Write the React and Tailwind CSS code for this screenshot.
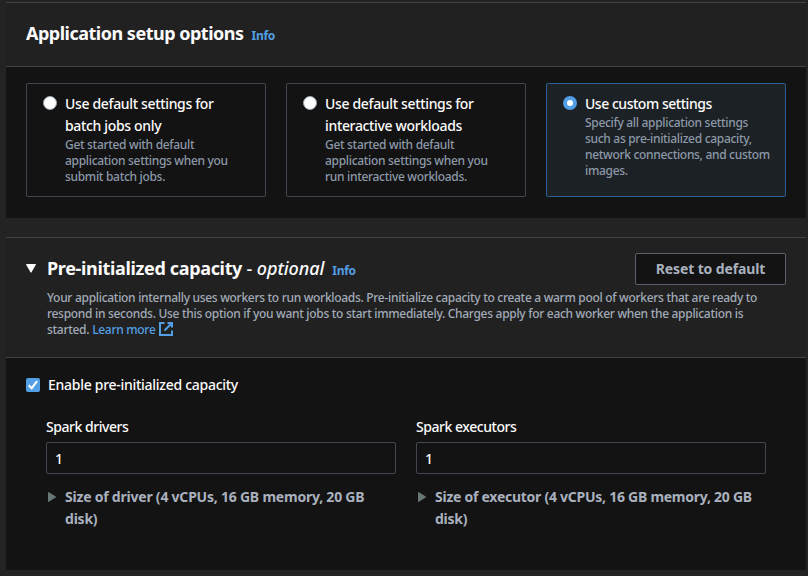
function Info({ className = '' }) {
  return <a className={`text-[12px] font-bold tracking-[-0.3px] text-[#539fe5] ${className}`}>Info</a>;
}

function Radio({ checked }) {
  return (
    <span
      className={`mt-[3px] flex size-[14px] shrink-0 items-center justify-center rounded-full ${
        checked ? 'bg-[#539fe5]' : 'border border-[#9ba7b6] bg-white'
      }`}
    >
      {checked && <span className="size-[6px] rounded-full bg-white" />}
    </span>
  );
}

function Lines({ lines }) {
  return lines.map((line) => (
    <span key={line} className="block whitespace-nowrap">
      {line}
    </span>
  ));
}

function Tile({ title, description, checked }) {
  return (
    <div
      className={`flex h-[114px] gap-[8px] rounded-[2px] border pl-[16px] pt-[9px] ${
        checked ? 'border-[#2c5f95] bg-[#1c2125]' : 'border-[#414750]'
      }`}
    >
      <Radio checked={checked} />
      <div>
        <div
          className={`text-[14px] font-medium leading-[22px] text-[#fbfbfb] ${
            checked ? 'tracking-[-0.47px]' : 'tracking-[-0.34px]'
          }`}
        >
          <Lines lines={title} />
        </div>
        <div className="text-[12px] font-medium leading-[16px] tracking-[-0.31px] text-[#8d99a8]">
          <Lines lines={description} />
        </div>
      </div>
    </div>
  );
}

function Worker({ label, size, tracking }) {
  return (
    <div className="w-[350px]">
      <div className="text-[14px] font-medium leading-[22px] tracking-[-0.46px] text-[#fbfbfb]">{label}</div>
      <div className="mt-[4px] flex h-[32px] items-center rounded-[2px] border border-[#414750] px-[8px] text-[14px] font-medium text-[#fbfbfb]">
        1
      </div>
      <div className={`mt-[12px] flex text-[14px] font-bold leading-[22px] text-[#a9b1be] ${tracking}`}>
        <svg className="ml-[2px] mt-[6px] mr-[9px] h-[10px] w-[8px] shrink-0" viewBox="0 0 8 10">
          <path d="M.5.5 7.7 5 .5 9.5Z" fill="#687876" stroke="#687876" strokeLinejoin="round" />
        </svg>
        <div>
          <Lines lines={[size, 'disk)']} />
        </div>
      </div>
    </div>
  );
}

export default function App() {
  return (
    <main className="h-[576px] w-[808px] overflow-hidden bg-[#232323] pl-[6px] pr-[2px] pt-[2px] font-['Noto_Sans','Open_Sans',sans-serif]">
      <section className="h-[216px] border-t border-[#424242] bg-[#131313]">
        <header className="flex h-[64px] items-baseline border-b border-[#424242] bg-[#212121] px-[20px] pt-[17px]">
          <h2 className="text-[18px] font-bold leading-[26px] tracking-[-0.5px] text-[#fbfbfb]">Application setup options</h2>
          <Info className="ml-[8px]" />
        </header>
        <div className="grid grid-cols-3 gap-[20px] px-[20px] pt-[16px]">
          <Tile
            title={['Use default settings for', 'batch jobs only']}
            description={['Get started with default', 'application settings when you', 'submit batch jobs.']}
          />
          <Tile
            title={['Use default settings for', 'interactive workloads']}
            description={['Get started with default', 'application settings when you', 'run interactive workloads.']}
          />
          <Tile
            checked
            title={['Use custom settings']}
            description={['Specify all application settings', 'such as pre-initialized capacity,', 'network connections, and custom', 'images.']}
          />
        </div>
      </section>

      <section className="mt-[19px] h-[333px] border-t border-[#424242] bg-[#131313]">
        <header className="h-[120px] border-b border-[#424242] bg-[#212121] px-[20px] pt-[15px]">
          <div className="flex h-[32px] items-start">
            <svg className="mt-[11px] mr-[11px] h-[9px] w-[10px] shrink-0" viewBox="0 0 10 9">
              <path d="M.5.5h9L5 8.300Z" fill="#fbfbfb" stroke="#fbfbfb" strokeLinejoin="round" />
            </svg>
            <div className="flex items-baseline pt-[2px]">
              <h2 className="whitespace-nowrap text-[18px] font-bold leading-[26px] tracking-[-0.34px] text-[#fbfbfb]">
                Pre-initialized capacity <span className="font-medium tracking-[-0.06px]">- <i>optional</i></span>
              </h2>
              <Info className="ml-[8px]" />
            </div>
            <button className="ml-auto h-[32px] w-[151px] rounded-[2px] border border-[#5a606b] bg-[#131313] pb-[2px] text-[14px] font-bold tracking-[-0.12px] text-[#a9b1be]">
              Reset to default
            </button>
          </div>
          <div className="ml-[21px] mt-[5px] text-[12px] font-medium leading-[16px] tracking-[-0.3px] text-[#a2abb8]">
            <Lines
              lines={[
                'Your application internally uses workers to run workloads. Pre-initialize capacity to create a warm pool of workers that are ready to',
                'respond in seconds. Use this option if you want jobs to start immediately. Charges apply for each worker when the application is',
              ]}
            />
            <div className="flex h-[16px]">
              <span>started.</span>
              <a className="ml-[3px] flex font-medium text-[#539fe5]">
                Learn more
                <svg className="ml-[3px] -mt-px size-[16px]" viewBox="0 0 16 16" fill="none" stroke="#539fe5" strokeWidth="2">
                  <path d="M6.500 2H2v12h12V9.500M9.500 2H14v4.500M14 2 6.500 9.500" />
                </svg>
              </a>
            </div>
          </div>
        </header>
        <div className="px-[20px] pt-[16px]">
          <div className="flex items-center gap-[8px] text-[14px] font-medium leading-[22px] tracking-[-0.28px] text-[#fbfbfb]">
            <svg className="size-[14px]" viewBox="0 0 14 14">
              <rect width="14" height="14" rx="2" fill="#539fe5" />
              <path d="m2.700 7.200 3 3 5.400-7" fill="none" stroke="white" strokeWidth="2" />
            </svg>
            Enable pre-initialized capacity
          </div>
          <div className="mt-[20px] flex gap-[20px] pl-[20px]">
            <Worker label="Spark drivers" size="Size of driver (4 vCPUs, 16 GB memory, 20 GB" tracking="tracking-[-0.22px]" />
            <Worker label="Spark executors" size="Size of executor (4 vCPUs, 16 GB memory, 20 GB" tracking="tracking-[-0.26px]" />
          </div>
        </div>
      </section>
    </main>
  );
}
